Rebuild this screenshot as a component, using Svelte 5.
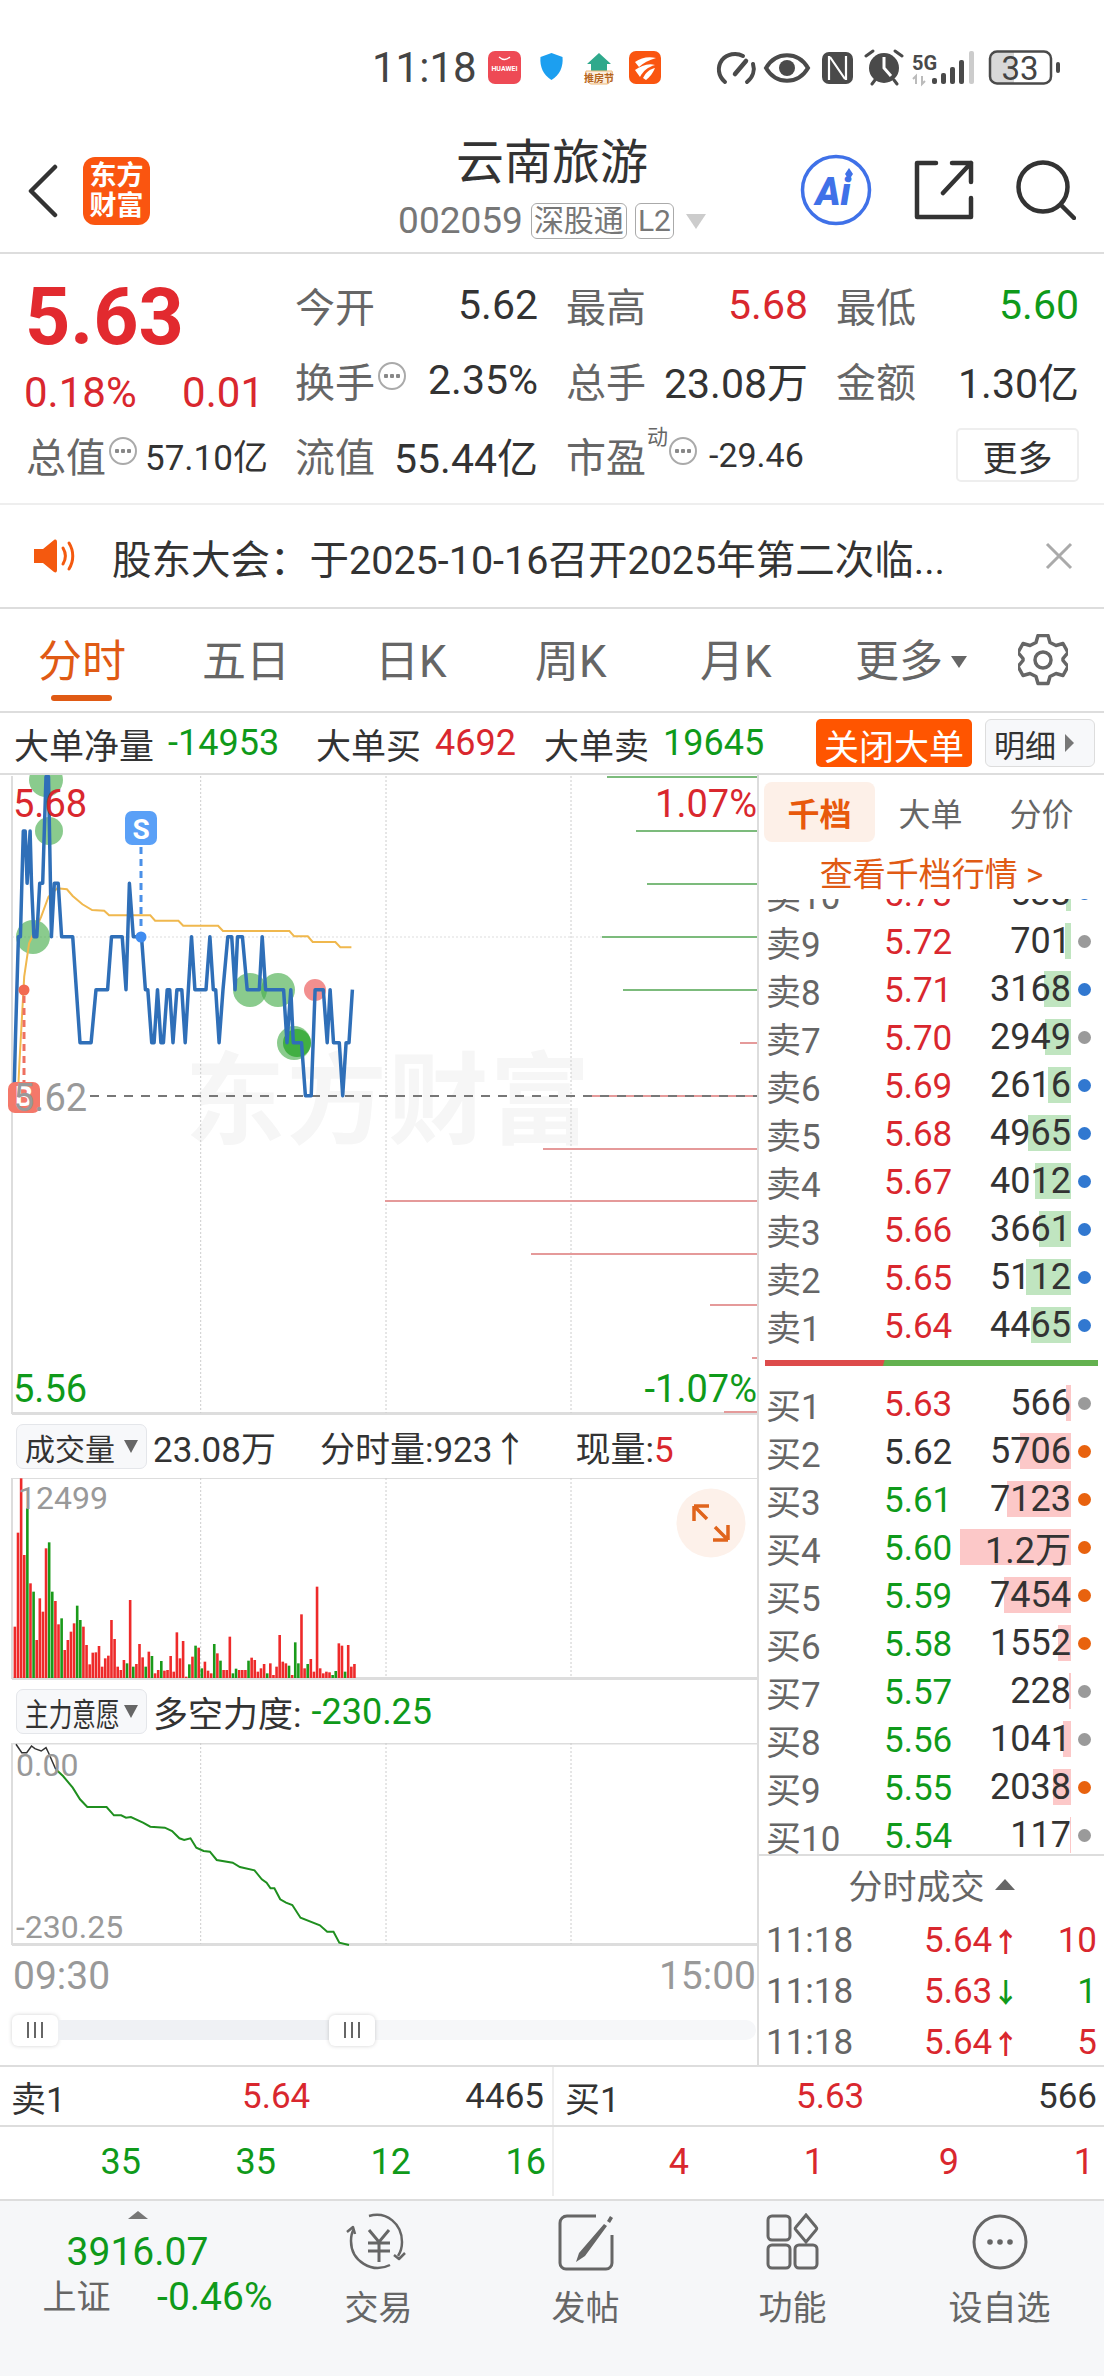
<script>
    // price chart points are read off the crop, sx = x * 2.063, sy = (y - 770) * 3
    const blueRaw = [[28,1020],[32,800],[38,500],[42,500],[48,183],[52,183],[56,340],[62,183],[65,340],[70,500],[76,500],[82,340],[88,340],[95,20],[100,20],[106,500],[112,340],[120,340],[127,500],[150,500],[165,818],[188,818],[198,659],[222,659],[230,500],[252,500],[260,659],[267,340],[275,500],[292,500],[300,659],[305,659],[313,818],[318,818],[325,659],[332,818],[337,818],[345,659],[350,659],[357,818],[365,659],[375,659],[382,818],[395,500],[402,659],[425,659],[433,500],[440,659],[445,659],[452,818],[460,659],[470,500],[478,500],[485,659],[490,500],[500,500],[510,659],[535,659],[541,500],[548,659],[585,659],[592,818],[600,659],[605,818],[622,818],[630,977],[642,977],[650,659],[667,659],[675,818],[681,659],[688,818],[700,818],[707,977],[714,818],[720,818],[727,659]];
    const yellowRaw = [[36,1000],[40,880],[50,620],[60,520],[85,440],[100,380],[118,355],[138,358],[150,378],[170,403],[190,420],[215,422],[225,436],[310,436],[320,452],[368,452],[378,467],[450,467],[460,483],[597,483],[607,499],[635,499],[645,516],[692,516],[702,532],[725,532]];
    const pts = (raw, top) => raw.map(([x, y]) => `${(x / 2.063).toFixed(1)},${(top + y / 3).toFixed(1)}`).join(' ');
    const bluePts = pts(blueRaw, 770);
    const yellowPts = pts(yellowRaw, 770);

    const hist = [
        [607, 777, 'g'], [636, 831, 'g'], [647, 884, 'g'], [602, 937, 'g'], [623, 990, 'g'],
        [740, 1043, 'r'], [586, 1096, 'r'], [543, 1149, 'r'], [385, 1201, 'r'], [531, 1254, 'r'],
        [710, 1305, 'r'], [752, 1358, 'r'], [724, 1412, 'r']
    ];

    const volRaw = 'r680 r398 r235 r465 g325 r550 g575 r720 r595 r635 r445 g427 g575 r603 r673 g655 r750 r720 r695 r670 g617 g660 r680 r735 r793 r758 r757 r738 r800 r775 r767 r660 r717 r800 r810 r780 g790 r600 g800 r792 r732 r772 g800 r755 g768 r820 r810 g783 r812 r810 r768 r815 r697 r775 r723 r830 g793 r770 g737 r743 g805 r785 r812 r820 g732 r760 g782 r810 r810 r710 g820 g806 r810 r810 r810 g782 r773 r780 r815 r805 r792 g820 r790 r825 r800 r705 r785 r790 g797 r825 g727 g790 r643 r805 g792 r777 r815 r560 r805 r820 r815 r817 g825 g813 r730 r737 g815 r735 r800 r792';
    const vols = volRaw.split(' ').map((v, i) => ({
        x: 13.6 + i * 3.115,
        y: 1400 + Number(v.slice(1)) / 3,
        c: v[0] === 'r' ? '#ee2a2a' : '#1a9a1a'
    }));

    const blackRaw = [[33,190],[45,215],[55,215],[65,195],[72,203],[85,210],[95,200],[100,215],[115,265]];
    const greenRaw = [[115,265],[130,285],[150,320],[165,355],[180,378],[220,378],[235,403],[250,403],[260,410],[270,408],[295,425],[310,437],[340,440],[355,450],[370,472],[380,477],[393,472],[405,500],[420,510],[433,512],[447,537],[480,545],[495,558],[525,568],[540,595],[550,605],[558,622],[566,622],[578,655],[590,665],[603,672],[620,710],[660,733],[675,752],[688,752],[700,785],[720,792]];
    const blackPts = pts(blackRaw, 1680);
    const greenPts = pts(greenRaw, 1680);

    const sells = [
        ['卖10', '5.73', '533', 5, 'b'], ['卖9', '5.72', '701', 6, 'n'], ['卖8', '5.71', '3168', 27, 'b'],
        ['卖7', '5.70', '2949', 26, 'n'], ['卖6', '5.69', '2616', 23, 'b'], ['卖5', '5.68', '4965', 43, 'b'],
        ['卖4', '5.67', '4012', 36, 'b'], ['卖3', '5.66', '3661', 32, 'b'], ['卖2', '5.65', '5112', 45, 'b'],
        ['卖1', '5.64', '4465', 40, 'b']
    ];
    const buys = [
        ['买1', '5.63', 'up', '566', 5, 'n'], ['买2', '5.62', 'flat', '5706', 51, 'o'], ['买3', '5.61', 'down', '7123', 64, 'o'],
        ['买4', '5.60', 'down', '1.2万', 111, 'o'], ['买5', '5.59', 'down', '7454', 67, 'o'], ['买6', '5.58', 'down', '1552', 13, 'o'],
        ['买7', '5.57', 'down', '228', 2, 'n'], ['买8', '5.56', 'down', '1041', 8, 'n'], ['买9', '5.55', 'down', '2038', 18, 'o'],
        ['买10', '5.54', 'down', '117', 1, 'n']
    ];
    const ticks = [
        ['5.64', '↑', 'up', '10', 'up'],
        ['5.63', '↓', 'down', '1', 'down'],
        ['5.64', '↑', 'up', '5', 'up']
    ];
    const grid = [200.7, 386, 571];
</script>

<div class="page">
    <div class="status">
        <span class="clock">11:18</span>
        <svg class="notif" width="173" height="36" viewBox="488 50 173 36">
            <rect x="488" y="52" width="33" height="33" rx="7" fill="#ee4a55"/>
            <path d="M499 58q5.500 5 11 0" fill="none" stroke="#fff" stroke-width="1.200"/>
            <text x="504.500" y="72" class="hw">HUAWEI</text>
            <path d="M551.500 54l11 4c1 10-3 18-11 23c-8-5-12-13-11-23z" fill="#1c9ff0"/>
            <path d="M599 54l12 11h-4v8h-16v-8h-4z" fill="#2fa98c"/>
            <path d="M586 72h26c2 6-1 12-5 13h-16c-4-1-7-7-5-13z" fill="#fbeedd" stroke="#eeb878"/>
            <text x="599" y="83" class="fest">推房节</text>
            <rect x="629" y="52" width="32" height="33" rx="7" fill="#fa5510"/>
            <path d="M635 63c6-4 13-6 21-4c-7 2-13 5-17 9zM635 71c6-4 13-7 20-5c-7 2-12 6-15 12zM643 79c3-6 7-9 12-10c-2 5-5 9-9 12z" fill="#fff"/>
        </svg>
        <svg class="sys" width="346" height="38" viewBox="716 49 346 38">
            <g fill="none" stroke="#4a4a4a" stroke-width="4" stroke-linecap="round">
                <path d="M725 82c-7-6-8-15-3-22c5-6 14-8 21-4"/>
                <path d="M747 82c6-5 8-12 6-18"/>
                <path d="M735 74l11-13" stroke-width="4.500"/>
                <path d="M766 68c10-17 32-17 42 0c-10 17-32 17-42 0z"/>
                <path d="M866 56l7-5M902 56l-7-5M872 84l3-4M897 84l-3-4" stroke-width="3"/>
            </g>
            <circle cx="787" cy="68" r="8" fill="#4a4a4a"/>
            <rect x="822" y="52" width="31" height="32" rx="7" fill="#4a4a4a"/>
            <path d="M829 56v24M846 56v24M830 57l15 22" fill="none" stroke="#fff" stroke-width="2.200"/>
            <circle cx="884" cy="68" r="15" fill="#4a4a4a"/>
            <path d="M884 57v11l7 8" fill="none" stroke="#fff" stroke-width="3"/>
            <text x="912" y="70" class="fiveg">5G</text>
            <path d="M916 84v-8l-3 3M922 76v8l3-3" fill="none" stroke="#bbb" stroke-width="2"/>
            <g fill="#4a4a4a">
                <rect x="932" y="78" width="5" height="6" rx="2"/>
                <rect x="941" y="73" width="5" height="11" rx="2"/>
                <rect x="950" y="67" width="5" height="17" rx="2"/>
                <rect x="959" y="60" width="5" height="24" rx="2"/>
            </g>
            <rect x="969" y="51" width="5" height="33" rx="2" fill="#ccc"/>
            <path d="M996 51.500h18v32h-18a6 6 0 0 1-6-6v-20a6 6 0 0 1 6-6z" fill="#d8d8d8"/>
            <rect x="990" y="51.500" width="61" height="32" rx="7" fill="none" stroke="#4a4a4a" stroke-width="2.500"/>
            <text x="1020" y="80" class="batt">33</text>
            <rect x="1056" y="62" width="4" height="11" rx="2" fill="#4a4a4a"/>
        </svg>
    </div>

    <header class="head">
        <div class="head-left">
            <svg width="31" height="54" viewBox="0 0 31 54"><path d="M28 3L4 27l24 24" fill="none" stroke="#333" stroke-width="4.500" stroke-linecap="round" stroke-linejoin="round"/></svg>
            <div class="logo"><span>东方</span><span>财富</span></div>
        </div>
        <div class="head-mid">
            <div class="title">云南旅游</div>
            <div class="sub">
                <span class="code">002059</span>
                <span class="chip">深股通</span>
                <span class="chip">L2</span>
                <span class="caret"></span>
            </div>
        </div>
        <div class="head-right">
            <svg width="72" height="72" viewBox="0 0 72 72">
                <circle cx="36" cy="36" r="33.500" fill="none" stroke="#3f71e8" stroke-width="3.500"/>
                <text x="33" y="51" class="ai">Ai</text>
                <path d="M49 14l4 6l-4 6l-4-6z" fill="#3f71e8"/>
            </svg>
            <svg width="60" height="60" viewBox="0 0 60 60" fill="none" stroke="#333" stroke-width="4.500" stroke-linecap="round" stroke-linejoin="round">
                <path d="M22 3H3v54h54V38M38 3h19v19M57 3L29 33"/>
            </svg>
            <svg width="60" height="60" viewBox="0 0 60 60" fill="none" stroke="#333" stroke-width="4.500" stroke-linecap="round">
                <circle cx="27" cy="27" r="24.500"/>
                <path d="M45 45l13 13"/>
            </svg>
        </div>
    </header>

    <section class="quote">
        <div class="quote-left">
            <div class="bigprice">5.63</div>
            <div class="changes"><span>0.18%</span><span>0.01</span></div>
            <div class="cell first">
                <span class="lab">总值</span><i class="info"></i>
                <span class="val small">57.10亿</span>
            </div>
        </div>
        <div class="quote-grid">
            <div class="cell"><span class="lab">今开</span><span class="val push">5.62</span></div>
            <div class="cell"><span class="lab">最高</span><span class="val push up">5.68</span></div>
            <div class="cell"><span class="lab">最低</span><span class="val push down">5.60</span></div>
            <div class="cell"><span class="lab">换手</span><i class="info"></i><span class="val push">2.35%</span></div>
            <div class="cell"><span class="lab">总手</span><span class="val push">23.08万</span></div>
            <div class="cell"><span class="lab">金额</span><span class="val push">1.30亿</span></div>
            <div class="cell"><span class="lab">流值</span><span class="val push">55.44亿</span></div>
            <div class="cell"><span class="lab">市盈</span><sup class="dong">动</sup><i class="info"></i><span class="val pe">-29.46</span></div>
            <div class="cell"><button class="more">更多</button></div>
        </div>
    </section>

    <section class="notice">
        <svg width="43" height="36" viewBox="0 0 43 36">
            <path d="M0 11h9L20 2c2-1 3 0 3 2v28c0 2-1 3-3 2L9 25H0z" fill="#f4590f"/>
            <path d="M29 10c3 5 3 11 0 16M35 5c5 8 5 18 0 26" fill="none" stroke="#f4590f" stroke-width="3" stroke-linecap="round"/>
        </svg>
        <span class="notice-text">股东大会：于2025-10-16召开2025年第二次临...</span>
        <svg width="28" height="28" viewBox="0 0 28 28"><path d="M2 2l24 24M26 2L2 26" stroke="#aaa" stroke-width="3"/></svg>
    </section>

    <nav class="tabs">
        <div class="tab active">分时<b></b></div>
        <div class="tab">五日</div>
        <div class="tab">日K</div>
        <div class="tab">周K</div>
        <div class="tab">月K</div>
        <div class="tab">更多<span class="tab-caret"></span></div>
        <svg width="50" height="52" viewBox="0 0 50 52" fill="none" stroke="#666" stroke-width="3.500" stroke-linejoin="round">
            <path d="M20 2h10l2 7l6 3l7-2l5 9l-5 6v2l5 6l-5 9l-7-2l-6 3l-2 7H20l-2-7l-6-3l-7 2l-5-9l5-6v-2l-5-6l5-9l7 2l6-3z" transform="translate(0 -0.500)"/>
            <circle cx="25" cy="26" r="8"/>
        </svg>
    </nav>

    <section class="bigorder">
        <div class="bo-group"><span>大单净量</span><span class="num down">-14953</span></div>
        <div class="bo-group"><span>大单买</span><span class="num up">4692</span></div>
        <div class="bo-group"><span>大单卖</span><span class="num down">19645</span></div>
        <button class="close-big">关闭大单</button>
        <button class="detail">明细<span class="detail-caret"></span></button>
    </section>

    <div class="main">
        <div class="charts">
            <svg class="block" width="758" height="640" viewBox="0 775 758 640">
                <text x="185" y="1136" class="mark" textLength="405">东方财富</text>
                <line x1="12" y1="776" x2="12" y2="1414" stroke="#ddd" stroke-width="2"/>
                <line x1="12" y1="1413.500" x2="758" y2="1413.500" stroke="#ddd" stroke-width="3"/>
                {#each grid as x}
                    <line x1={x} y1="776" x2={x} y2="1413" stroke="#ccc" stroke-dasharray="2 2"/>
                {/each}
                <line x1="12" y1="937" x2="758" y2="937" stroke="#ddd" stroke-dasharray="2 2"/>
                {#each hist as [x, y, c]}
                    <line x1={x} y1={y} x2="757" y2={y} stroke={c === 'g' ? '#7cbb7c' : '#e59a9a'} stroke-width="2"/>
                {/each}
                <line x1="90" y1="1096" x2="757" y2="1096" stroke="#777" stroke-width="2" stroke-dasharray="9 8"/>

                <circle cx="46" cy="780" r="17" fill="#4caf50" fill-opacity=".65"/>
                <circle cx="49" cy="831" r="14" fill="#4caf50" fill-opacity=".65"/>
                <circle cx="33" cy="937" r="17" fill="#4caf50" fill-opacity=".65"/>
                <circle cx="250" cy="990" r="17" fill="#4caf50" fill-opacity=".65"/>
                <circle cx="278" cy="990" r="17" fill="#4caf50" fill-opacity=".65"/>
                <circle cx="294" cy="1043" r="17" fill="#4caf50" fill-opacity=".65"/>
                <circle cx="297" cy="1043" r="14" fill="#22a322" fill-opacity=".7"/>
                <circle cx="315" cy="990" r="11" fill="#ee6a6a" fill-opacity=".75"/>

                <polyline points={yellowPts} fill="none" stroke="#f0b84e" stroke-width="2"/>
                <polyline points={bluePts} fill="none" stroke="#2f6fb8" stroke-width="3.500" stroke-linejoin="round"/>

                <line x1="24" y1="996" x2="24" y2="1082" stroke="#ee7060" stroke-width="3" stroke-dasharray="7 5"/>
                <circle cx="24" cy="990" r="5.500" fill="#f26a50"/>
                <rect x="8" y="1082" width="32" height="31" rx="7" fill="#f4786a"/>
                <text x="24" y="1106" class="badge">B</text>

                <line x1="141" y1="847" x2="141" y2="930" stroke="#4a90e8" stroke-width="3" stroke-dasharray="7 5"/>
                <circle cx="141" cy="937" r="5.500" fill="#3f8cf0"/>
                <rect x="125" y="811" width="32" height="34" rx="7" fill="#5aa0f7"/>
                <text x="141" y="839" class="badge">S</text>

                <text x="13" y="817" class="axis up">5.68</text>
                <text x="757" y="817" class="axis end up">1.07%</text>
                <text x="13" y="1111" class="axis gray">5.62</text>
                <text x="13" y="1402" class="axis down">5.56</text>
                <text x="757" y="1402" class="axis end down">-1.07%</text>
            </svg>

            <div class="pane-head">
                <span class="select">成交量<em></em></span>
                <span class="pane-txt">23.08万</span>
                <span class="pane-txt gap1">分时量:923↑</span>
                <span class="pane-txt gap2">现量:<span class="up">5</span></span>
            </div>

            <svg class="block" width="758" height="202" viewBox="0 1478 758 202">
                <line x1="12" y1="1478" x2="758" y2="1478" stroke="#ddd" stroke-width="2"/>
                <line x1="12" y1="1478" x2="12" y2="1679" stroke="#ddd" stroke-width="2"/>
                <line x1="12" y1="1678.500" x2="758" y2="1678.500" stroke="#ddd" stroke-width="3"/>
                {#each grid as x}
                    <line x1={x} y1="1478" x2={x} y2="1678" stroke="#ccc" stroke-dasharray="2 2"/>
                {/each}
                {#each vols as v}
                    <rect x={v.x} y={v.y} width="2.600" height={1678 - v.y} fill={v.c}/>
                {/each}
                <text x="18" y="1509" class="axis gray small">12499</text>
                <circle cx="711" cy="1523" r="34.500" fill="#fdf1ea"/>
                <path d="M694 1506h15M694 1506v15M694 1506l13 13M728 1540h-15M728 1540v-15M728 1540l-13-13" fill="none" stroke="#e0641c" stroke-width="3.500"/>
            </svg>

            <div class="pane-head">
                <span class="select"><span class="squeeze">主力意愿</span><em></em></span>
                <span class="pane-txt">多空力度:</span>
                <span class="pane-txt down">-230.25</span>
            </div>

            <svg class="block" width="758" height="203" viewBox="0 1742 758 203">
                <line x1="12" y1="1742.500" x2="758" y2="1742.500" stroke="#ddd" stroke-width="2"/>
                <line x1="12" y1="1742" x2="12" y2="1944" stroke="#ddd" stroke-width="2"/>
                <line x1="12" y1="1943.500" x2="758" y2="1943.500" stroke="#ddd" stroke-width="3"/>
                {#each grid as x}
                    <line x1={x} y1="1742" x2={x} y2="1943" stroke="#ccc" stroke-dasharray="2 2"/>
                {/each}
                <polyline points={blackPts} fill="none" stroke="#333" stroke-width="1.500"/>
                <polyline points={greenPts} fill="none" stroke="#1f8f1f" stroke-width="2"/>
                <text x="16" y="1775" class="axis gray small">0.00</text>
                <text x="16" y="1937" class="axis gray small">-230.25</text>
            </svg>

            <div class="time-axis"><span>09:30</span><span>15:00</span></div>

            <div class="slider">
                <div class="track">
                    <div class="handle"><i></i><i></i><i></i></div>
                    <div class="track-on"></div>
                    <div class="handle"><i></i><i></i><i></i></div>
                </div>
            </div>
        </div>

        <aside class="depth">
            <div class="depth-tabs">
                <span class="pill">千档</span>
                <span class="dtab">大单</span>
                <span class="dtab">分价</span>
            </div>
            <div class="see">查看千档行情 &gt;</div>
            <div class="sell-view">
                <div class="sell-list">
                    {#each sells as [name, price, vol, w, dot]}
                        <div class="row">
                            <span class="r-name">{name}</span>
                            <span class="r-price up">{price}</span>
                            <span class="r-vol"><i class="bar green" style="width:{w}px"></i><span>{vol}</span></span>
                            <i class="dot {dot}"></i>
                        </div>
                    {/each}
                </div>
            </div>
            <div class="split"><i></i></div>
            <div class="buy-view">
                {#each buys as [name, price, tone, vol, w, dot]}
                    <div class="row">
                        <span class="r-name">{name}</span>
                        <span class="r-price {tone}">{price}</span>
                        <span class="r-vol"><i class="bar pink" style="width:{w}px"></i><span>{vol}</span></span>
                        <i class="dot {dot}"></i>
                    </div>
                {/each}
            </div>
            <div class="tick-head">分时成交<span class="tick-caret"></span></div>
            {#each ticks as [p, arrow, tone, n, ntone]}
                <div class="tick">
                    <span class="t-time">11:18</span>
                    <span class="t-price up">{p}<b class={tone}>{arrow}</b></span>
                    <span class="t-num {ntone}">{n}</span>
                </div>
            {/each}
        </aside>
    </div>

    <section class="one">
        <div class="one-side">
            <span class="o-name">卖1</span><span class="o-price up">5.64</span><span class="o-vol">4465</span>
        </div>
        <div class="one-side right">
            <span class="o-name">买1</span><span class="o-price up">5.63</span><span class="o-vol">566</span>
        </div>
    </section>
    <section class="orders">
        <div class="ord-side down">
            <span>35</span><span>35</span><span>12</span><span>16</span>
        </div>
        <div class="ord-side right up">
            <span>4</span><span>1</span><span>9</span><span>1</span>
        </div>
    </section>

    <footer class="foot">
        <div class="index">
            <span class="index-caret"></span>
            <div class="index-val down">3916.07</div>
            <div class="index-row"><span class="index-name">上证</span><span class="down">-0.46%</span></div>
        </div>
        <div class="item">
            <svg width="68" height="58" viewBox="0 0 68 58" fill="none" stroke="#666" stroke-width="2.500">
                <path d="M24 3c18-5 33 8 33 26c0 6-2 11-4 14M45 52c-18 9-39-4-39-24c0-4 1-9 3-12"/>
                <path d="M2 19l6-5l2 7M49 42l5 4l6-6" stroke-linejoin="round"/>
                <path d="M24 17l10 12l10-12M23 30h22M23 38h22M34 29v20" stroke-width="3"/>
            </svg>
            <span>交易</span>
        </div>
        <div class="item">
            <svg width="56" height="58" viewBox="0 0 56 58" fill="none" stroke="#666" stroke-width="3">
                <path d="M38 3H9a7 7 0 0 0-7 7v40a6 6 0 0 0 6 6h40a6 6 0 0 0 6-6V22"/>
                <path d="M52 3l3 2l-3 5l-3-2zM46 11l3 2l-22 30l-9 6l3-9z" fill="#666" stroke="none"/>
            </svg>
            <span>发帖</span>
        </div>
        <div class="item">
            <svg width="54" height="58" viewBox="0 0 54 58" fill="none" stroke="#666" stroke-width="3">
                <rect x="2" y="3" width="22" height="24" rx="4"/>
                <path d="M40 2l10 12c1 1 1 2 0 3l-10 12l-10-12c-1-1-1-2 0-3z"/>
                <rect x="2" y="32" width="22" height="23" rx="4"/>
                <rect x="29" y="32" width="22" height="23" rx="4"/>
            </svg>
            <span>功能</span>
        </div>
        <div class="item">
            <svg width="56" height="58" viewBox="0 0 56 58" fill="none" stroke="#666" stroke-width="3">
                <circle cx="28" cy="29" r="26"/>
                <circle cx="18" cy="29" r="2.800" fill="#666" stroke="none"/>
                <circle cx="28" cy="29" r="2.800" fill="#666" stroke="none"/>
                <circle cx="38" cy="29" r="2.800" fill="#666" stroke="none"/>
            </svg>
            <span>设自选</span>
        </div>
    </footer>
</div>

<style>
    :global(body) {
        margin: 0;
        background: #fff;
    }

    .page {
        width: 1104px;
        height: 2376px;
        overflow: hidden;
        font-family: Roboto, "Noto Sans CJK SC", sans-serif;
        color: #333;
        background: #fff;
    }

    .up { color: #d9272e; }
    .down { color: #0f9a1a; }
    .flat { color: #333; }

    /* status bar */
    .status {
        height: 121px;
        box-sizing: border-box;
        padding: 49px 0 0 372px;
        display: flex;
        align-items: flex-start;
    }
    .clock {
        width: 116px;
        font-size: 42px;
        line-height: 38px;
        color: #444;
    }
    .notif { margin-right: 55px; }
    .hw {
        font: 700 7px Roboto, sans-serif;
        fill: #fff;
        text-anchor: middle;
    }
    .fest {
        font: 700 10px "Noto Sans CJK SC", sans-serif;
        fill: #b5651d;
        text-anchor: middle;
    }
    .fiveg {
        font: 700 20px Roboto, sans-serif;
        fill: #4a4a4a;
    }
    .batt {
        font: 400 33px Roboto, sans-serif;
        fill: #444;
        text-anchor: middle;
    }

    /* header */
    .head {
        height: 133px;
        box-sizing: border-box;
        display: grid;
        grid-template-columns: 1fr auto 1fr;
        border-bottom: 2px solid #ddd;
    }
    .head-left {
        display: flex;
        align-items: center;
        gap: 25px;
        padding: 8px 0 0 27px;
    }
    .logo {
        width: 67px;
        height: 68px;
        border-radius: 12px;
        background: #fa5510;
        color: #fff;
        font-size: 27px;
        font-weight: 700;
        line-height: 30px;
        display: flex;
        flex-direction: column;
        align-items: center;
        justify-content: center;
    }
    .head-mid {
        display: flex;
        flex-direction: column;
        align-items: center;
        padding-top: 12px;
    }
    .title {
        font-size: 48px;
        line-height: 60px;
        color: #333;
    }
    .sub {
        display: flex;
        align-items: center;
        gap: 8px;
        margin-top: 8px;
        color: #777;
    }
    .code {
        font-size: 37px;
        line-height: 40px;
    }
    .chip {
        font-size: 30px;
        line-height: 34px;
        padding: 0 2px;
        border: 1.500px solid #aaa;
        border-radius: 6px;
        color: #777;
    }
    .caret {
        margin-left: 4px;
        border-left: 10px solid transparent;
        border-right: 10px solid transparent;
        border-top: 15px solid #ccc;
    }
    .head-right {
        display: flex;
        align-items: center;
        justify-content: flex-end;
        gap: 42px;
        padding: 6px 28px 0 0;
    }
    .ai {
        font: italic 900 38px Roboto, sans-serif;
        fill: #3f71e8;
        text-anchor: middle;
    }

    /* quote */
    .quote {
        height: 251px;
        box-sizing: border-box;
        display: flex;
        padding-top: 13px;
        border-bottom: 2px solid #eee;
    }
    .quote-left {
        width: 295px;
        box-sizing: border-box;
        padding-left: 26px;
    }
    .bigprice {
        height: 100px;
        font-size: 79px;
        font-weight: 700;
        line-height: 100px;
        color: #e22a2f;
        margin-left: -1px;
    }
    .changes {
        height: 50px;
        width: 240px;
        margin-left: -2px;
        display: flex;
        justify-content: space-between;
        align-items: center;
        font-size: 42px;
        color: #d9272e;
    }
    .quote-grid {
        display: grid;
        grid-template-columns: 243px 242px 243px;
        grid-auto-rows: 75px;
        column-gap: 28px;
    }
    .cell {
        display: flex;
        align-items: center;
        height: 75px;
    }
    .lab {
        font-size: 40px;
        color: #666;
        white-space: nowrap;
    }
    .val {
        font-size: 41px;
        color: #333;
        white-space: nowrap;
    }
    .val.small {
        font-size: 35px;
        margin-left: 6px;
    }
    .val.up { color: #d9272e; }
    .val.down { color: #0f9a1a; }
    .val.pe {
        font-size: 34px;
        margin-left: 10px;
    }
    .push { margin-left: auto; }
    .info {
        width: 24px;
        height: 24px;
        margin: 0 2px 8px 3px;
        border: 2.500px solid #aaa;
        border-radius: 50%;
        flex: none;
        background: radial-gradient(circle at 25% 50%, #888 2px, transparent 2.500px), radial-gradient(circle at 50% 50%, #888 2px, transparent 2.500px), radial-gradient(circle at 75% 50%, #888 2px, transparent 2.500px);
    }
    .dong {
        font-size: 21px;
        line-height: 22px;
        color: #666;
        align-self: flex-start;
        margin: 9px -2px 0 1px;
    }
    .more {
        margin-left: auto;
        width: 123px;
        height: 54px;
        padding: 0;
        box-sizing: border-box;
        background: #fff;
        border: 2px solid #eee;
        border-radius: 5px;
        font: 35px "Noto Sans CJK SC", sans-serif;
        color: #333;
    }

    /* notice */
    .notice {
        height: 104px;
        box-sizing: border-box;
        display: flex;
        align-items: center;
        padding: 0 31px 0 34px;
        border-bottom: 2px solid #ddd;
    }
    .notice-text {
        flex: 1;
        margin-left: 35px;
        font-size: 39.500px;
        color: #333;
        white-space: nowrap;
    }

    /* tabs */
    .tabs {
        height: 104px;
        box-sizing: border-box;
        display: grid;
        grid-template-columns: 164px 173px 160px 165px 155px 163px 50px;
        padding-left: 38px;
        align-items: center;
        border-bottom: 2px solid #ddd;
    }
    .tab {
        font-size: 44px;
        color: #666;
        line-height: 50px;
        display: flex;
        align-items: center;
        position: relative;
        white-space: nowrap;
        padding-top: 4px;
    }
    .tab.active { color: #e05a14; }
    .tab b {
        position: absolute;
        left: 13px;
        top: 62px;
        width: 61px;
        height: 6px;
        border-radius: 3px;
        background: #e05a14;
    }
    .tab-caret {
        margin-left: 8px;
        border-left: 8px solid transparent;
        border-right: 8px solid transparent;
        border-top: 12px solid #666;
    }

    /* big order row */
    .bigorder {
        height: 62px;
        box-sizing: border-box;
        display: grid;
        grid-template-columns: 302px 228px 272px 156px 110px;
        padding-left: 14px;
        align-items: center;
        border-bottom: 2px solid #ddd;
        font-size: 35px;
    }
    .bo-group {
        display: flex;
        align-items: center;
        gap: 14px;
        white-space: nowrap;
    }
    .num { font-size: 36px; }
    .close-big {
        height: 48px;
        padding: 0;
        border: none;
        border-radius: 5px;
        background: #ff5500;
        color: #fff;
        font: 35px "Noto Sans CJK SC", sans-serif;
    }
    .detail {
        margin-left: 13px;
        width: 110px;
        height: 48px;
        padding: 0 0 0 8px;
        border: 1.500px solid #ddd;
        border-radius: 6px;
        background: #f7f8fa;
        color: #333;
        font: 31px "Noto Sans CJK SC", sans-serif;
        display: flex;
        align-items: center;
        gap: 9px;
    }
    .detail-caret {
        border-top: 9px solid transparent;
        border-bottom: 9px solid transparent;
        border-left: 9px solid #777;
    }

    /* main */
    .main {
        display: flex;
        height: 1290px;
        border-bottom: 2px solid #ddd;
        box-sizing: content-box;
    }
    .charts {
        width: 758px;
        flex: none;
    }
    .block { display: block; }
    .mark {
        font: 700 100px "Noto Sans CJK SC", sans-serif;
        fill: #f6f6f6;
    }
    .axis {
        font: 38px Roboto, sans-serif;
    }
    .axis.small { font-size: 32px; }
    .axis.end { text-anchor: end; }
    .axis.up { fill: #d9272e; }
    .axis.down { fill: #0f9a1a; }
    .axis.gray { fill: #999; }
    .badge {
        font: 700 28px Roboto, sans-serif;
        fill: #fff;
        text-anchor: middle;
    }
    .pane-head {
        height: 63px;
        box-sizing: border-box;
        display: flex;
        align-items: center;
        padding-left: 16px;
        white-space: nowrap;
    }
    .select {
        width: 131px;
        height: 45px;
        box-sizing: border-box;
        flex: none;
        border: 1.500px solid #e4e6ea;
        border-radius: 7px;
        background: #f7f8fa;
        font-size: 30px;
        display: flex;
        align-items: center;
        justify-content: space-between;
        padding: 0 8px;
    }
    .select em {
        flex: none;
        border-left: 7px solid transparent;
        border-right: 7px solid transparent;
        border-top: 13px solid #666;
    }
    .squeeze {
        display: block;
        width: 92px;
        white-space: nowrap;
        transform: scaleX(.74);
        transform-origin: left center;
        font-size: 32px;
    }
    .pane-txt {
        font-size: 35px;
        margin-left: 6px;
        color: #333;
    }
    .pane-txt.down { color: #0f9a1a; font-size: 36px; margin-left: 10px; }
    .gap1 { margin-left: 44px; }
    .gap2 { margin-left: 48px; }

    .time-axis {
        height: 60px;
        box-sizing: border-box;
        display: flex;
        justify-content: space-between;
        align-items: center;
        padding: 0 2px 0 13px;
        font-size: 39px;
        color: #999;
    }
    .slider {
        height: 61px;
        box-sizing: border-box;
        padding: 9px 2px 0 12px;
    }
    .track {
        height: 20px;
        margin-top: 5px;
        border-radius: 10px;
        background: #f6f7f9;
        display: flex;
        align-items: center;
    }
    .track-on {
        width: 271px;
        height: 20px;
        background: #eff1f4;
    }
    .handle {
        width: 46px;
        height: 31px;
        flex: none;
        background: #fff;
        border-radius: 6px;
        box-shadow: 0 0 4px rgba(0, 0, 0, .18);
        display: flex;
        align-items: center;
        justify-content: center;
        gap: 5px;
    }
    .handle i {
        width: 2px;
        height: 16px;
        background: #666;
    }

    /* depth panel */
    .depth {
        flex: 1;
        min-width: 0;
        border-left: 2px solid #ddd;
        margin-left: -1px;
    }
    .depth-tabs {
        height: 74px;
        box-sizing: border-box;
        display: flex;
        align-items: center;
        padding-left: 5px;
        font-size: 32px;
    }
    .pill {
        width: 111px;
        height: 60px;
        border-radius: 8px;
        background: #fdf0e8;
        color: #e8590c;
        font-weight: 700;
        display: flex;
        align-items: center;
        justify-content: center;
    }
    .dtab {
        width: 111px;
        text-align: center;
        color: #666;
    }
    .see {
        height: 50px;
        line-height: 52px;
        font-size: 33px;
        color: #e05a14;
        text-align: center;
    }
    .sell-view {
        height: 451px;
        overflow: hidden;
    }
    .sell-list { margin-top: -30px; }
    .row {
        height: 48px;
        display: flex;
        align-items: center;
        padding-left: 7px;
        font-size: 35px;
        position: relative;
    }
    .r-name {
        width: 118px;
        flex: none;
        color: #666;
    }
    .r-price { width: 67px; flex: none; padding-top: 3px; }
    .r-vol {
        width: 120px;
        height: 36px;
        flex: none;
        display: flex;
        align-items: center;
        justify-content: flex-end;
        position: relative;
        font-size: 36px;
        color: #333;
    }
    .r-vol span { position: relative; }
    .bar {
        position: absolute;
        top: 0;
        right: 0;
        height: 36px;
    }
    .bar.green { background: #c0e5c0; }
    .bar.pink { background: #fcc8c8; }
    .dot {
        width: 13px;
        height: 13px;
        border-radius: 50%;
        margin-left: 7px;
        flex: none;
    }
    .dot.n { background: #9a9a9a; }
    .dot.b { background: #3178d0; }
    .dot.o { background: #e8620e; }
    .split {
        height: 16px;
        padding: 10px 6px 0 6px;
        box-sizing: border-box;
    }
    .split i {
        display: block;
        height: 6px;
        background: linear-gradient(105deg, #dd4b4b 115px, #63b14f 116px);
    }
    .buy-view {
        height: 490px;
        overflow: hidden;
        padding-top: 13px;
        box-sizing: border-box;
        border-bottom: 2px solid #ddd;
    }
    .tick-head {
        height: 56px;
        display: flex;
        align-items: center;
        justify-content: center;
        gap: 10px;
        font-size: 34px;
        color: #666;
    }
    .tick-caret {
        border-left: 10px solid transparent;
        border-right: 10px solid transparent;
        border-bottom: 11px solid #666;
    }
    .tick {
        height: 51px;
        box-sizing: border-box;
        display: flex;
        align-items: center;
        padding: 5px 7px 0;
        font-size: 35px;
    }
    .t-time {
        width: 158px;
        color: #666;
    }
    .t-price { white-space: nowrap; }
    .t-price b {
        font-size: 27px;
        font-weight: 700;
    }
    .t-num {
        margin-left: auto;
    }

    /* bottom rows */
    .one {
        height: 60px;
        box-sizing: border-box;
        display: flex;
        border-bottom: 2px solid #ddd;
        font-size: 35px;
    }
    .one-side {
        width: 552px;
        box-sizing: border-box;
        padding: 0 8px 0 11px;
        display: flex;
        align-items: center;
        flex: none;
    }
    .one-side.right {
        border-left: 2px solid #eee;
        width: 552px;
        padding-right: 7px;
    }
    .o-name { width: 231px; }
    .o-price { width: 70px; }
    .o-vol {
        margin-left: auto;
        color: #333;
    }
    .orders {
        height: 74px;
        box-sizing: border-box;
        display: flex;
        border-bottom: 2px solid #ddd;
        font-size: 36px;
        padding-bottom: 3px;
    }
    .ord-side {
        width: 552px;
        flex: none;
        box-sizing: border-box;
        display: grid;
        grid-template-columns: repeat(4, 135px);
        align-items: center;
        justify-content: end;
        text-align: right;
        padding-right: 6px;
    }
    .ord-side.right {
        border-left: 2px solid #eee;
        padding-right: 10px;
    }

    /* footer nav */
    .foot {
        height: 176px;
        background: #f6f7f9;
        display: grid;
        grid-template-columns: 275px repeat(4, 207px);
    }
    .index {
        display: flex;
        flex-direction: column;
        align-items: center;
        padding-top: 10px;
    }
    .index-caret {
        border-left: 10px solid transparent;
        border-right: 10px solid transparent;
        border-bottom: 8px solid #777;
    }
    .index-val {
        font-size: 39px;
        line-height: 44px;
        margin-top: 11px;
    }
    .index-row {
        display: flex;
        width: 230px;
        margin-left: 40px;
        justify-content: space-between;
        align-items: center;
        font-size: 39px;
        line-height: 46px;
    }
    .index-name {
        color: #666;
        font-size: 34px;
    }
    .item {
        display: flex;
        flex-direction: column;
        align-items: center;
        padding-top: 12px;
        gap: 16px;
        font-size: 34px;
        color: #666;
        line-height: 42px;
    }
</style>
